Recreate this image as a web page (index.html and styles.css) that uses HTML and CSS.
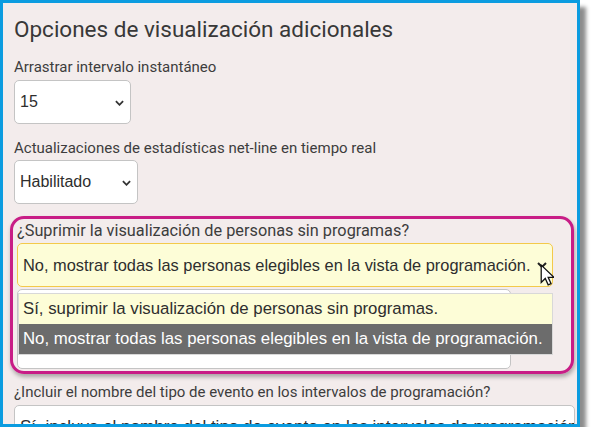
FILE: index.html
```html
<!DOCTYPE html>
<html lang="es">
<head>
    <meta charset="UTF-8">
    <title>Opciones de visualización adicionales</title>
    <link rel="stylesheet" href="styles.css">
</head>
<body>
    <div class="frame">
        <h2 class="title">Opciones de visualización adicionales</h2>

        <div class="field">
            <label class="label">Arrastrar intervalo instantáneo</label>
            <div class="select select-snap">
                <span>15</span>
                <svg class="chevron" viewBox="0 0 10 6"><path d="M1 1l4 4 4-4"/></svg>
            </div>
        </div>

        <div class="field field-last">
            <label class="label">Actualizaciones de estadísticas net-line en tiempo real</label>
            <div class="select select-live">
                <span>Habilitado</span>
                <svg class="chevron" viewBox="0 0 10 6"><path d="M1 1l4 4 4-4"/></svg>
            </div>
        </div>

        <!-- opción resaltada con la lista desplegada -->
        <div class="highlight">
            <label class="label label-big">¿Suprimir la visualización de personas sin programas?</label>
            <div class="select select-open">
                <span>No, mostrar todas las personas elegibles en la vista de programación.</span>
                <svg class="chevron dark" viewBox="0 0 10 6"><path d="M1 1l4 4 4-4"/></svg>
                <svg class="cursor" viewBox="0 0 12 19">
                    <path d="M1 1v15l3.5-3.5 2.5 5.5 2.5-1-2.5-5.5h5z"/>
                </svg>
            </div>
            <div class="select-under">
                <ul class="options">
                    <li>Sí, suprimir la visualización de personas sin programas.</li>
                    <li class="selected">No, mostrar todas las personas elegibles en la vista de programación.</li>
                </ul>
            </div>
        </div>

        <div class="field">
            <label class="label">¿Incluir el nombre del tipo de evento en los intervalos de programación?</label>
            <div class="select select-wide">
                <span>Sí, incluya el nombre del tipo de evento en los intervalos de programación</span>
            </div>
        </div>
    </div>
</body>
</html>
```

FILE: styles.css
```css
* {
    box-sizing: border-box;
    margin: 0;
    padding: 0;
}

body {
    background: #fff;
    font-family: Roboto, "Liberation Sans", sans-serif;
    color: #3d3d3d;
}

.frame {
    width: 580px;
    height: 427px;
    overflow: hidden;
    background: #f3ecec;
    border: 3px solid #0b9ce0;
    box-shadow: 6px 7px 4px rgba(0,0,0,0.45);
    padding: 13px 0 0 11px;
}

.title {
    font-weight: 400;
    font-size: 22.5px;
    line-height: 26px;
    color: #383838;
    margin-bottom: 17px;
}

.label {
    display: block;
    font-size: 15px;
    line-height: 17px;
    margin-bottom: 3.5px;
    white-space: nowrap;
}

.label-big {
    font-size: 16.3px;
    margin-bottom: 4px;
}

.field {
    margin-bottom: 16px;
}

.field-last {
    margin-bottom: 12px;
}

.select {
    position: relative;
    display: flex;
    align-items: center;
    height: 44px;
    background: #fff;
    border: 1px solid #c4c4c4;
    border-radius: 5px;
    padding: 0 5px;
    font-family: "Liberation Sans", Arial, sans-serif;
    font-size: 16px;
    color: #2e2e2e;
    white-space: nowrap;
    overflow: hidden;
}

.select-snap {
    width: 117px;
}

.select-live {
    width: 124px;
}

.chevron {
    position: absolute;
    right: 6px;
    top: 19px;
    width: 9px;
    height: 6px;
    fill: none;
    stroke: #333;
    stroke-width: 2;
}

.highlight {
    margin: 0 0 10px -4px;
    width: 564px;
    height: 158px;
    border: 3px solid #c81d86;
    border-radius: 14px;
    box-shadow: 1px 3px 4px rgba(0,0,0,0.3);
    padding: 3px 0 0 4px;
}

.select-open {
    width: 536px;
    background: #fdfdd7;
    border-color: #f3c94a;
    font-size: 16.4px;
    overflow: visible;
}

.chevron.dark {
    right: 5px;
    top: 18px;
    width: 10px;
    stroke: #222;
}

.cursor {
    position: absolute;
    left: 522px;
    top: 20px;
    width: 14px;
    height: 22px;
    fill: #fff;
    stroke: #111;
    stroke-width: 1.1;
}

.select-under {
    position: relative;
    width: 494px;
    height: 80px;
    margin-top: 2px;
    background: #fff;
    border: 1px solid #c4c4c4;
    border-radius: 5px;
}

.options {
    position: absolute;
    left: 0;
    top: 3px;
    width: 535px;
    list-style: none;
    border: 1px solid #d8d8d8;
    font-family: "Liberation Sans", Arial, sans-serif;
    font-size: 16.8px;
    background: #fdfdd7;
    white-space: nowrap;
}

.options li {
    height: 30px;
    line-height: 30px;
    padding-left: 4px;
    color: #2e2e2e;
}

.options li.selected {
    background: #6c6c6c;
    color: #fff;
}

.select-wide {
    width: 561px;
    font-size: 17px;
}
```
